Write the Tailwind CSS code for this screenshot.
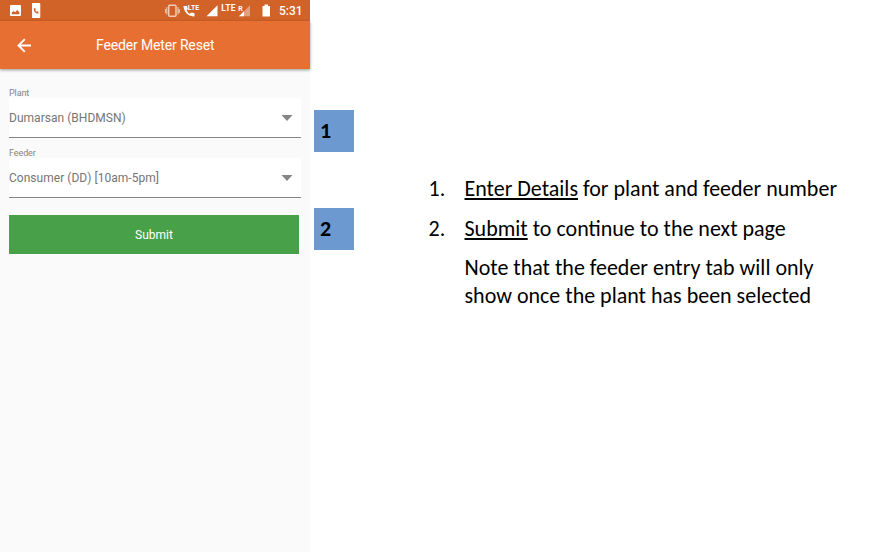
<!DOCTYPE html>
<html lang="en">
<head>
<meta charset="utf-8">
<title>Feeder Meter Reset</title>
<script src="https://cdn.jsdelivr.net/npm/@tailwindcss/browser@4"></script>
</head>
<body class="bg-white">
<main class="flex h-[552px] w-[870px] overflow-hidden">
  <section class="flex w-[310px] shrink-0 flex-col bg-[#fafafa] font-['Roboto',sans-serif]">
    <div class="flex h-[21px] shrink-0 items-center bg-[#d16228] text-white">
      <svg class="h-[21px] w-[260px] shrink-0" viewBox="0 0 260 21" fill="none">
        <rect x="10" y="5" width="11" height="11" rx="1" fill="#fff"/>
        <path d="M11.700 14.200v-1.500l1.800-1.700 1.700 1.300 2-2.300 2.200 2.500v1.700z" fill="#d16228"/>
        <rect x="32" y="3" width="8.300" height="15" rx="1" fill="#fff"/>
        <path d="M33.800 8.200c-.2 3.300 1.700 5.300 4.700 5.300v-1.800l-1.600-.5-.6.500-1-1.200.5-.8-.4-1.500z" fill="#d16228"/>
        <rect x="168.700" y="5.200" width="7.300" height="11" rx="1" stroke="#f3cbb5" stroke-width="1.500"/>
        <path d="M166.800 7v7.500M165.500 9v4M178 7v7.500M179.300 9v4" stroke="#efbea4" stroke-width="1.200"/>
        <path d="M183.500 6c0 5.600 4.900 10.600 11 10.600v-3.300l-3-.9-1.700 1.300c-1.500-.8-2.400-2-3.100-3.300l1.100-1.600-.9-2.800z" fill="#fff"/>
        <text x="187.800" y="9.500" class="font-['Roboto'] text-[7px] font-bold" fill="#fff" textLength="11.500">LTE</text>
        <path d="M206.500 16.200h11V5.200z" fill="#fff"/>
        <text x="221.300" y="10.700" class="font-['Roboto'] text-[8.500px] font-bold" fill="#fff" textLength="14.300">LTE</text>
        <path d="M239 16.200h11V5.200z" fill="#dfa07c"/>
        <path d="M239 16.200h5v-5z" fill="#fff"/>
        <text x="238.300" y="10.500" class="font-['Roboto'] text-[7px] font-bold" fill="#fff">R</text>
      </svg>
      <svg class="ml-[2px] h-[21px] w-[9px] shrink-0" viewBox="0 0 9 21"><path d="M0.500 6V16.500H8V6H6V4.500H2.500V6z" fill="#fff"/></svg>
      <span class="ml-[8px] pt-px text-[12px] font-medium leading-[21px]">5:31</span>
    </div>
    <header class="grid h-[48px] shrink-0 grid-cols-[96px_1fr_96px] items-center bg-[#e86f32] text-white shadow-[0_1px_3px_rgba(0,0,0,0.4)]">
      <svg class="ml-[17px] h-[15px] w-[15px]" viewBox="0 0 15 15" fill="none" stroke="#fff" stroke-width="1.900"><path d="M14 7.500H1.700M7.800 1.200L1.500 7.500l6.300 6.300"/></svg>
      <h1 class="text-center text-[14px] tracking-[-0.15px] whitespace-nowrap">Feeder Meter Reset</h1>
    </header>
    <form class="flex flex-col pt-[17px] pr-[9px] pl-[9px] text-[#757575]">
      <label class="h-[12px] text-[9px] leading-[15px] tracking-[-0.1px] text-[#858585]">Plant</label>
      <div class="flex h-[40px] items-center justify-between border-b border-[#858585] bg-white pr-[8px]">
        <span class="pt-px text-[12px] tracking-[0.03px]">Dumarsan (BHDMSN)</span>
        <svg class="h-[6px] w-[12px]" viewBox="0 0 12 6" fill="#858585"><path d="M0.500 0h11L6 6z"/></svg>
      </div>
      <label class="mt-[8px] h-[12px] text-[9px] leading-[15px] tracking-[-0.1px] text-[#858585]">Feeder</label>
      <div class="flex h-[40px] items-center justify-between border-b border-[#858585] bg-white pr-[8px]">
        <span class="pt-px text-[12px] tracking-[0.03px]">Consumer (DD) [10am-5pm]</span>
        <svg class="h-[6px] w-[12px]" viewBox="0 0 12 6" fill="#858585"><path d="M0.500 0h11L6 6z"/></svg>
      </div>
      <button type="button" class="mt-[17px] mr-[2px] h-[39px] bg-[#48a048] pt-px text-[12px] text-white">Submit</button>
    </form>
  </section>
  <aside class="ml-1 flex w-10 shrink-0 flex-col gap-14 pt-[110px] font-['Carlito','Lato',sans-serif] text-[22px] font-bold text-black">
    <div class="flex h-[42px] items-center bg-[#6b99d0] pb-0.5 pl-[6px]">1</div>
    <div class="flex h-[42px] items-center bg-[#6b99d0] pb-0.5 pl-[6px]">2</div>
  </aside>
  <section class="ml-[74.5px] pt-[175px] font-['Carlito','Lato',sans-serif] text-[22px] leading-[28px] whitespace-nowrap text-black">
    <ol>
      <li class="flex"><span class="w-[36px]">1.</span><p><u class="decoration-[1.5px] underline-offset-2">Enter Details</u> for plant and feeder number</p></li>
      <li class="mt-[12px] flex"><span class="w-[36px]">2.</span><p><u class="decoration-[1.5px] underline-offset-2">Submit</u> to continue to the next page</p></li>
    </ol>
    <p class="mt-[11px] ml-[36px]">Note that the feeder entry tab will only<br>show once the plant has been selected</p>
  </section>
</main>
</body>
</html>
